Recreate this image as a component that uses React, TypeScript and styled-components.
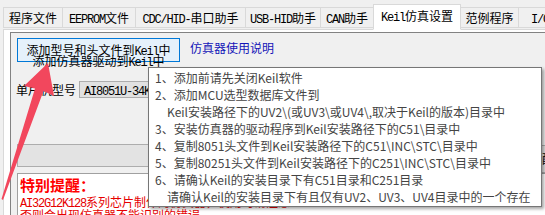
import React from "react";
import styled, { createGlobalStyle } from "styled-components";

const GlobalStyle = createGlobalStyle`
  html, body {
    margin: 0;
    padding: 0;
    background: #f0f0f0;
    overflow: hidden;
  }
  body {
    font-family: "Noto Sans CJK SC", sans-serif;
  }
`;

const Window = styled.div`
  position: relative;
  width: 545px;
  height: 215px;
  overflow: hidden;
  background: #f0f0f0;
  font-family: "Noto Sans CJK SC", sans-serif;
  font-size: 12px;
  color: #000;
`;

const TabStrip = styled.div`
  position: relative;
  z-index: 1;
  display: flex;
  align-items: flex-end;
  height: 29px;
  padding-left: 4px;
`;

const Tab = styled.div<{ $w: number; $active?: boolean }>`
  flex: none;
  box-sizing: border-box;
  width: ${(p) => p.$w}px;
  height: ${(p) => (p.$active ? 26 : 21)}px;
  margin-left: -1px;
  margin-bottom: ${(p) => (p.$active ? -1 : 1)}px;
  display: flex;
  align-items: center;
  justify-content: center;
  padding-bottom: ${(p) => (p.$active ? 3 : 0)}px;
  background: ${(p) => (p.$active ? "#ffffff" : "#f0f0f0")};
  border: 1px solid #d9d9d9;
  border-bottom-color: ${(p) => (p.$active ? "#ffffff" : "#d9d9d9")};
  white-space: nowrap;
`;

const TabText = styled.div`
  height: 14px;
  line-height: 14px;
`;

const TabPage = styled.div`
  box-sizing: border-box;
  margin-left: 3px;
  height: 186px;
  padding: 2px 0 0 6px;
  background: #ffffff;
  border: 1px solid #d9d9d9;
  border-right: none;
  border-bottom: none;
`;

const Panel = styled.div`
  box-sizing: border-box;
  width: 560px;
  height: 200px;
  padding: 5px 0 0 6px;
  background: #f0f0f0;
  border: 1px solid #828282;
`;

const TopRow = styled.div`
  display: flex;
  align-items: flex-start;
  gap: 10px;
`;

const KeilButton = styled.div`
  box-sizing: border-box;
  flex: none;
  width: 163px;
  height: 24px;
  padding-top: 5px;
  background: #e5f1fb;
  border: 1px solid #0078d7;
  text-align: center;
  white-space: nowrap;
`;

const ButtonLine = styled.div`
  height: 11px;
  line-height: 11px;
`;

const HelpLink = styled.div`
  margin-top: 2px;
  line-height: 16px;
  color: #1414b8;
`;

const ModelRow = styled.div`
  display: flex;
  align-items: center;
  margin-top: 19px;
  height: 17px;
`;

const ModelLabel = styled.div`
  width: 63px;
  margin-left: -1px;
  line-height: 16px;
  white-space: nowrap;
`;

const ModelCombo = styled.div`
  box-sizing: border-box;
  width: 130px;
  height: 17px;
  padding-left: 4px;
  background: #e1e1e1;
  border: 1px solid #adadad;
  line-height: 15px;
  white-space: nowrap;
  overflow: hidden;
`;

const MiddleRow = styled.div`
  display: flex;
  align-items: flex-start;
  gap: 4px;
  margin-top: 46px;
  height: 29px;
`;

const Strip = styled.div`
  box-sizing: border-box;
  flex: none;
  width: 520px;
  height: 23px;
  background: #e3e3e3;
  border: 1px solid #adadad;
`;

const SideButton = styled.div`
  box-sizing: border-box;
  flex: none;
  width: 60px;
  height: 28px;
  margin-top: 1px;
  background: #e1e1e1;
  border: 1px solid #adadad;
  line-height: 26px;
  white-space: nowrap;
`;

const NoticeBox = styled.div`
  box-sizing: border-box;
  height: 60px;
  padding: 1px 2px;
  background: #ffffff;
  border: 1px solid #a0a0a0;
  color: #e60000;
  white-space: nowrap;
`;

const NoticeTitle = styled.div`
  height: 20px;
  font-size: 15px;
  font-weight: bold;
  line-height: 20px;
  color: #ff0000;
`;

const NoticeLine = styled.div`
  height: 13px;
  line-height: 13px;
`;

const Tooltip = styled.div`
  position: absolute;
  left: 148px;
  top: 67px;
  z-index: 3;
  box-sizing: border-box;
  width: 394px;
  height: 140px;
  padding: 1px 6px;
  background: #ffffff;
  border: 1px solid #767676;
  box-shadow: 2px 2px 3px rgba(0, 0, 0, 0.35);
  color: #444444;
  white-space: nowrap;
`;

const TipLine = styled.div<{ $indent?: boolean }>`
  height: 17px;
  line-height: 17px;
  padding-left: ${(p) => (p.$indent ? 12 : 0)}px;
`;

const ArrowLayer = styled.svg`
  position: absolute;
  left: 0;
  top: 0;
  z-index: 2;
  pointer-events: none;
`;

const Latin = styled.span`
  font-family: "Liberation Mono", monospace;
  letter-spacing: -1.2px;
`;

// SimSun style text: ascii runs are half width
const Song = ({ text }: { text: string }) => (
  <>
    {text
      .split(/([\x20-\x7e]+)/)
      .map((part, i) => (i % 2 ? <Latin key={i}>{part}</Latin> : part))}
  </>
);

const tabs = [
  { label: "程序文件", w: 60 },
  { label: "EEPROM文件", w: 74 },
  { label: "CDC/HID-串口助手", w: 111 },
  { label: "USB-HID助手", w: 76 },
  { label: "CAN助手", w: 54 },
  { label: "Keil仿真设置", w: 88, active: true },
  { label: "范例程序", w: 59 },
  { label: "I/O口配置", w: 80 },
];

const tips = [
  { text: "1、添加前请先关闭Keil软件" },
  { text: "2、添加MCU选型数据库文件到" },
  { text: "Keil安装路径下的UV2\\(或UV3\\或UV4\\,取决于Keil的版本)目录中", indent: true },
  { text: "3、安装仿真器的驱动程序到Keil安装路径下的C51\\目录中" },
  { text: "4、复制8051头文件到Keil安装路径下的C51\\INC\\STC\\目录中" },
  { text: "5、复制80251头文件到Keil安装路径下的C251\\INC\\STC\\目录中" },
  { text: "6、请确认Keil的安装目录下有C51目录和C251目录" },
  { text: "请确认Keil的安装目录下有且仅有UV2、UV3、UV4目录中的一个存在", indent: true },
];

const App = () => {
  return (
    <Window>
      <GlobalStyle />
      <TabStrip>
        {tabs.map((t) => (
          <Tab key={t.label} $w={t.w} $active={t.active}>
            <TabText><Song text={t.label} /></TabText>
          </Tab>
        ))}
      </TabStrip>
      <TabPage>
        <Panel>
          <TopRow>
            <KeilButton>
              <ButtonLine><Song text="添加型号和头文件到Keil中" /></ButtonLine>
              <ButtonLine><Song text="添加仿真器驱动到Keil中" /></ButtonLine>
            </KeilButton>
            <HelpLink>仿真器使用说明</HelpLink>
          </TopRow>
          <ModelRow>
            <ModelLabel>单片机型号</ModelLabel>
            <ModelCombo><Song text="AI8051U-34K64" /></ModelCombo>
          </ModelRow>
          <MiddleRow>
            <Strip />
            <SideButton>配置</SideButton>
          </MiddleRow>
          <NoticeBox>
            <NoticeTitle>特别提醒：</NoticeTitle>
            <NoticeLine><Song text="AI32G12K128系列芯片制作的仿真器，使用时请注意" /></NoticeLine>
            <NoticeLine><Song text="否则会出现仿真器不能识别的错误" /></NoticeLine>
          </NoticeBox>
        </Panel>
      </TabPage>

      <ArrowLayer width="70" height="215" viewBox="0 0 70 215">
        <polygon
          points="48,63 54,96 43.5,91 3,200 1.5,199 35,88.5 24,86"
          fill="#f2475d"
        />
      </ArrowLayer>

      <Tooltip>
        {tips.map((t, i) => (
          <TipLine key={i} $indent={t.indent}>{t.text}</TipLine>
        ))}
      </Tooltip>
    </Window>
  );
};

export default App;
